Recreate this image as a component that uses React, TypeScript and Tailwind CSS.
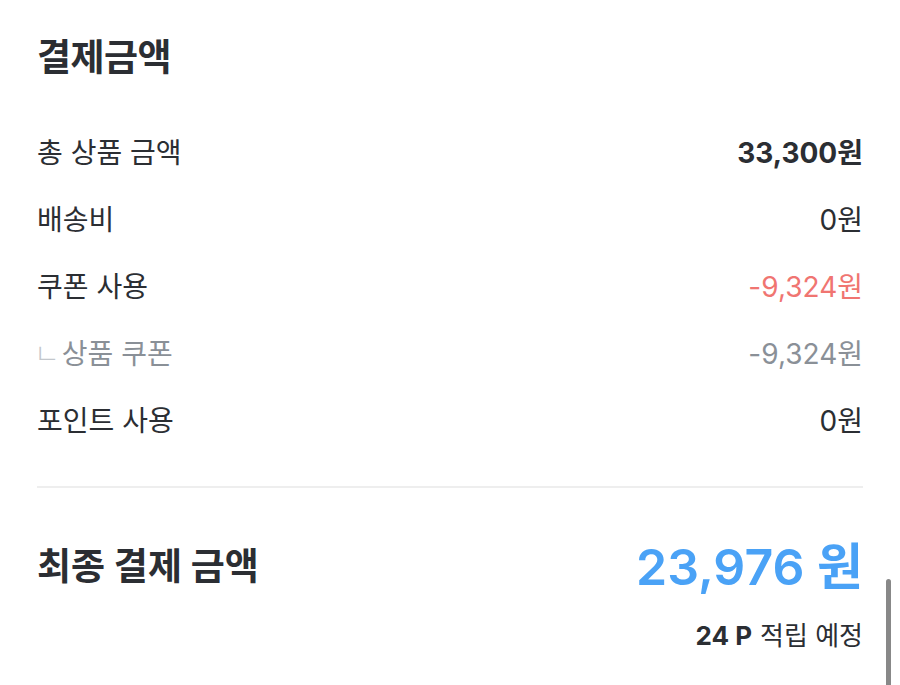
import React from "react";

type Row = {
  label: string;
  value: string;
  sub?: boolean;
  labelClass?: string;
  valueClass?: string;
};

const rows: Row[] = [
  { label: "총 상품 금액", value: "33,300원", valueClass: "font-bold text-[#2b2e33]" },
  { label: "배송비", value: "0원" },
  { label: "쿠폰 사용", value: "-9,324원", valueClass: "text-[#f07571]" },
  { label: "상품 쿠폰", value: "-9,324원", sub: true, labelClass: "text-[#8a9097]", valueClass: "text-[#8a9097]" },
  { label: "포인트 사용", value: "0원" },
];

const font = { fontFamily: 'Inter, "Noto Sans CJK KR", sans-serif' };

export default function App() {
  return (
    <div className="relative h-[685px] w-[900px] overflow-hidden bg-white text-[#2b2e33]" style={font}>
      <div className="px-[37px] pt-[34px]">
        <h1 className="h-[48px] text-[37px] font-bold leading-[48px] tracking-[-0.5px]">결제금액</h1>

        <div className="mt-[37px]">
          {rows.map((r) => (
            <div key={r.label + r.value} className="flex h-[67px] items-center justify-between text-[28px]">
              <div className={`flex items-center ${r.labelClass ?? ""}`}>
                {r.sub && <span className="-ml-[3px] mr-[2px] text-[28px] font-light leading-none text-[#c3c7cc]">ㄴ</span>}
                <span>{r.label}</span>
              </div>
              <span className={r.valueClass ?? ""}>{r.value}</span>
            </div>
          ))}
        </div>

        <div className="mt-[32px] h-[2px] bg-[#eeeeee]" />

        <div className="mt-[44px] flex h-[70px] items-center justify-between">
          <span className="text-[37px] font-bold">최종 결제 금액</span>
          <span className="text-[50px] font-semibold text-[#4aa2f6]">23,976 원</span>
        </div>

        <div className="mt-[13px] flex h-[40px] items-center justify-end text-[26px]">
          <span className="font-bold">24 P</span>
          <span className="ml-[8px]">적립 예정</span>
        </div>
      </div>

      <div className="absolute right-[9px] top-[579px] h-[120px] w-[5px] rounded-full bg-[#888888]" />
    </div>
  );
}
